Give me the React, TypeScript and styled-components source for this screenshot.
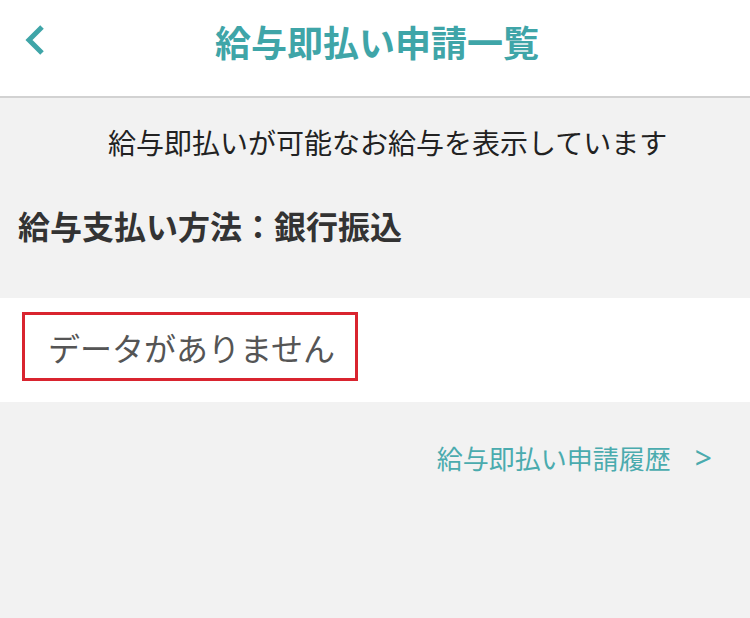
import React from 'react';
import styled, { createGlobalStyle } from 'styled-components';

const GlobalStyle = createGlobalStyle`
  html, body {
    margin: 0;
    padding: 0;
    background-color: #f2f2f2;
    font-family: "Noto Sans CJK JP", "Noto Sans", sans-serif;
  }
`;

const App: React.FC = () => {
  return (
    <Page>
      <GlobalStyle />
      <Header>
        <BackButton aria-label="戻る">
          <svg width="24" height="34" viewBox="0 0 24 34">
            <polyline
              points="19,4 6,17 19,30"
              fill="none"
              stroke="#3fa5a8"
              strokeWidth="5"
              strokeLinecap="butt"
              strokeLinejoin="miter"
            />
          </svg>
        </BackButton>
        <Title>給与即払い申請一覧</Title>
      </Header>
      <Notice>給与即払いが可能なお給与を表示しています</Notice>
      <Method>給与支払い方法：銀行振込</Method>
      <ListArea>
        <EmptyBox>データがありません</EmptyBox>
      </ListArea>
      <HistoryRow>
        <HistoryLink>
          給与即払い申請履歴
          <Arrow>&gt;</Arrow>
        </HistoryLink>
      </HistoryRow>
    </Page>
  );
};

const Page = styled.div`
  width: 750px;
  min-height: 618px;
  background-color: #f2f2f2;
`;

const Header = styled.header`
  position: relative;
  height: 96px;
  background-color: #fff;
  border-bottom: 2px solid #d2d2d2;
  display: flex;
  align-items: center;
  justify-content: center;
`;

const BackButton = styled.div`
  position: absolute;
  left: 20px;
  top: 20px;
  width: 30px;
  height: 40px;
  display: flex;
  align-items: center;
  justify-content: center;
  cursor: pointer;
`;

const Title = styled.h1`
  margin: 0 0 14px 4px;
  font-size: 36px;
  font-weight: 700;
  color: #3fa5a8;
  letter-spacing: 0;
`;

const Notice = styled.p`
  margin: 0;
  padding: 24px 0 0 108px;
  height: 60px;
  box-sizing: border-box;
  font-size: 28px;
  line-height: 40px;
  color: #222;
`;

const Method = styled.h2`
  margin: 0;
  padding: 47px 0 0 18px;
  height: 140px;
  box-sizing: border-box;
  font-size: 32px;
  line-height: 40px;
  font-weight: 700;
  color: #333;
`;

const ListArea = styled.div`
  background-color: #fff;
  height: 104px;
  padding: 14px 0 0 22px;
  box-sizing: border-box;
`;

const EmptyBox = styled.div`
  display: inline-flex;
  align-items: center;
  width: 336px;
  height: 69px;
  box-sizing: border-box;
  border: 3px solid #d9242f;
  padding-left: 23px;
  font-size: 32px;
  color: #555;
`;

const HistoryRow = styled.div`
  display: flex;
  justify-content: flex-end;
  padding: 36px 38px 0 0;
`;

const HistoryLink = styled.a`
  font-size: 26px;
  line-height: 40px;
  color: #4aabae;
  cursor: pointer;
  display: flex;
  align-items: center;
`;

const Arrow = styled.span`
  margin-left: 24px;
  font-family: "Noto Sans", sans-serif;
  font-size: 30px;
`;

export default App;
